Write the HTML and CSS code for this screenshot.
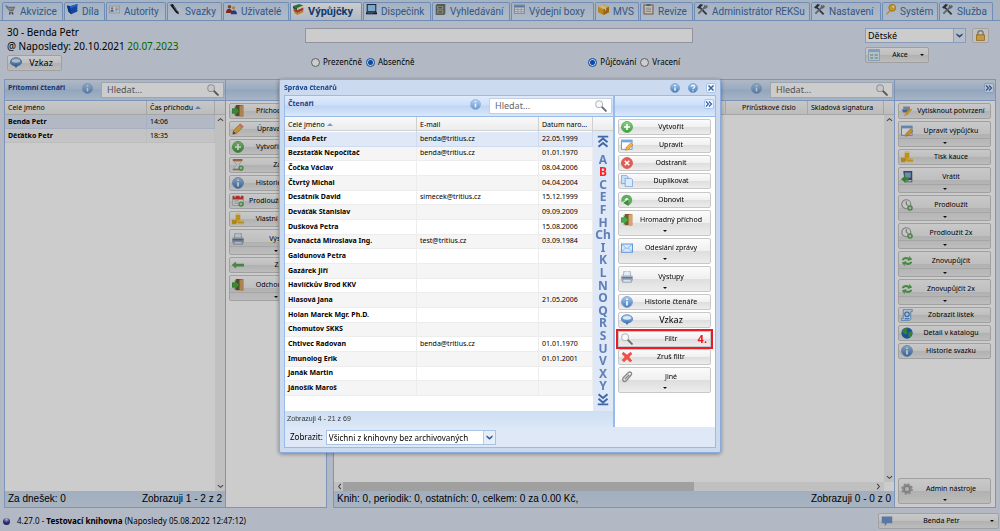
FILE: index.html
```html
<!DOCTYPE html>
<html lang="cs">
<head>
<meta charset="utf-8">
<title>Výpůjčky</title>
<link rel="stylesheet" href="styles.css">
</head>
<body>
<svg class="sprite" aria-hidden="true">
  <defs>
    <linearGradient id="gblue" x1="0" y1="0" x2="0" y2="1"><stop offset="0" stop-color="#a9cdf0"/><stop offset="1" stop-color="#3f78bd"/></linearGradient>
    <linearGradient id="ggreen" x1="0" y1="0" x2="0" y2="1"><stop offset="0" stop-color="#8fd38a"/><stop offset="1" stop-color="#3f9e3c"/></linearGradient>
  </defs>
  <symbol id="cart" viewBox="0 0 16 16"><path d="M0 2h3l1 2h11l-3 6H6z" fill="#7b828a"/><path d="M5 5l2 4M8 5v4M11 5l-1 4M4.500 7h9" stroke="#c9ced4" stroke-width=".8"/><path d="M6 12h6" stroke="#666" stroke-width="1.500"/><circle cx="7" cy="14" r="1.300" fill="#555"/><circle cx="11" cy="14" r="1.300" fill="#555"/></symbol>
  <symbol id="book" viewBox="0 0 16 16"><path d="M0 2l5 1 10-3v11l-9 4-4-4z" fill="#1557c9"/><path d="M0 2l4 2 2 11-4-4z" fill="#0b3f9b"/><path d="M4 4l11-4 1 2-11 4z" fill="#2f80ee"/></symbol>
  <symbol id="card" viewBox="0 0 16 16"><rect x=".5" y="3" width="15" height="10" fill="#e9edf3" stroke="#a9b4c4"/><circle cx="4.500" cy="6.500" r="1.600" fill="#b87745"/><path d="M2 11c0-3 5-3 5 0z" fill="#2f69b5"/><path d="M9 6h5M9 8h5M9 10h3" stroke="#8aa2c4"/></symbol>
  <symbol id="pen" viewBox="0 0 16 16"><path d="M0 1l4-1 8 11 1 4-4-2z" fill="#16191e"/><path d="M5 3l6 8" stroke="#9aa2ac"/><path d="M9 8l6-3v7z" fill="#e8eaed"/></symbol>
  <symbol id="users" viewBox="0 0 16 16"><circle cx="5" cy="4" r="2.600" fill="#9a5a2a"/><path d="M0 13c0-8 9-8 9 0z" fill="#9d2f28"/><circle cx="11" cy="5.500" r="2.400" fill="#d6a05f"/><path d="M7 15c0-8 9-8 9 0z" fill="#2a4f95"/></symbol>
  <symbol id="books" viewBox="0 0 16 16"><path d="M0 3l9-3 6 2-9 4z" fill="#3f8a44"/><path d="M0 3l6 3v3L0 6z" fill="#27632b"/><path d="M6 6l9-4v3L6 9z" fill="#f1f1e6"/><path d="M1 7l5 2 9-4v4l-9 4-5-3z" fill="#cc4631"/><path d="M2 10l4 3 9-4v3l-9 4-4-3z" fill="#e2a531"/></symbol>
  <symbol id="monitor" viewBox="0 0 16 16"><rect x="1" y="0" width="14" height="12" fill="#1b2b52"/><rect x="2.500" y="1.500" width="11" height="9" fill="#9bd2f4"/><path d="M0 12h16v3H0z" fill="#16203c"/><path d="M2 13h9" stroke="#8896b0"/></symbol>
  <symbol id="cabinet" viewBox="0 0 16 16"><path d="M1 2l2-2h12v14l-2 2H1z" fill="#6c7268"/><rect x="3" y="3" width="9" height="5" fill="#a6ab9f"/><rect x="3" y="9" width="9" height="5" fill="#a6ab9f"/><path d="M5 5.500h5M5 11.500h5" stroke="#40453c" stroke-width="1.500"/></symbol>
  <symbol id="grid" viewBox="0 0 16 16"><rect x=".5" y="1.500" width="15" height="12" fill="#f4f6f9" stroke="#8094b1"/><path d="M1 2h14v3H1z" fill="#6d92c5"/><path d="M1 8h14M1 11h14M5.500 5v8M10.500 5v8" stroke="#a5b5cb"/></symbol>
  <symbol id="box" viewBox="0 0 16 16"><path d="M0 4l8-4 8 4v8l-8 4-8-4z" fill="#e6a62e"/><path d="M0 4l8-4 8 4-8 4z" fill="#f9d781"/><path d="M8 8l8-4v8l-8 4z" fill="#c27f18"/><path d="M4 2.500l7 4v3" fill="none" stroke="#fff1cc" stroke-width="1.500"/></symbol>
  <symbol id="clip" viewBox="0 0 16 16"><rect x="1.500" y="1.500" width="13" height="13" fill="#f7f4ee" stroke="#8d6f58" stroke-width="1.500"/><path d="M5 0h6v3H5z" fill="#777"/><path d="M4 6h8M4 8.500h8M4 11h8" stroke="#888"/></symbol>
  <symbol id="tools" viewBox="0 0 16 16"><path d="M4 5L14 15" stroke="#3d444b" stroke-width="2.600"/><path d="M13 3L2 14" stroke="#767d84" stroke-width="2.600"/><path d="M0 5l5-5 4 1-6 6z" fill="#343b42"/><path d="M10 1l3 2 1-2 2 3-3 3-3-1z" fill="#767d84"/></symbol>
  <symbol id="key" viewBox="0 0 16 16"><path d="M8 8L1 15h3v-2h2v-2h2l2-1z" fill="#dfa31c"/><circle cx="10.500" cy="5.500" r="5" fill="#f3bd32" stroke="#b98313"/><circle cx="12" cy="4" r="1.500" fill="#fff"/></symbol>
  <symbol id="bubble" viewBox="0 0 16 16"><ellipse cx="8" cy="6.500" rx="7.500" ry="5.500" fill="url(#gblue)" stroke="#4d79b4"/><ellipse cx="8" cy="5" rx="5.500" ry="2.500" fill="#d9eafa"/><path d="M6 11l2 4 2-4z" fill="#3f6fae"/></symbol>
  <symbol id="flag" viewBox="0 0 16 16"><path d="M1 2h14v9H8l-3 4v-4H1z" fill="#6f96d0"/></symbol>
  <symbol id="info" viewBox="0 0 16 16"><circle cx="8" cy="8" r="7.300" fill="url(#gblue)" stroke="#7698c0"/><path d="M8 7v5.500M8 3.200v2" stroke="#fff" stroke-width="2.200"/></symbol>
  <symbol id="help" viewBox="0 0 16 16"><circle cx="8" cy="8" r="7.300" fill="url(#gblue)" stroke="#6f92bd"/><path d="M5.500 6c0-3 5.500-3 5 0 0 2-2.500 1.500-2.500 4M8 11.500v2" fill="none" stroke="#fff" stroke-width="1.800"/></symbol>
  <symbol id="lens" viewBox="0 0 16 16"><path d="M8.500 8.500l6 6" stroke="#6d6d6d" stroke-width="2.600" stroke-linecap="round"/><circle cx="5.500" cy="5.500" r="4.500" fill="#f7f9fa" stroke="#b3b8bb" stroke-width="1.400"/></symbol>
  <symbol id="lock" viewBox="0 0 16 16"><path d="M4 8V5a4 4 0 0 1 8 0v3" fill="none" stroke="#999" stroke-width="2"/><rect x="2" y="7" width="12" height="8" fill="#f0b43c" stroke="#b57c17"/><path d="M3 10h10M3 13h10" stroke="#ffe09a"/></symbol>
  <symbol id="table" viewBox="0 0 16 16"><rect x=".5" y=".5" width="15" height="15" rx="1" fill="#e2effc" stroke="#8fb2dd"/><path d="M1 1h14v3H1z" fill="#a5c4ea"/><path d="M3 7h4v2H3zM9 7h4v2H9zM3 11h4v2H3zM9 11h4v2H9z" fill="#8dbf9c"/></symbol>
  <symbol id="door" viewBox="0 0 16 16"><path d="M5 0h10v15H5z" fill="#7b5531"/><path d="M10 1l5-1v16l-5-1z" fill="#d9a566"/><path d="M0 5h4V2l6 6-6 6v-3H0z" fill="#4bab46" stroke="#2c7a2b" stroke-width=".7"/></symbol>
  <symbol id="pencil" viewBox="0 0 16 16"><path d="M1 15l1-5L11 1l4 4-9 9z" fill="#f2b544" stroke="#b8792a" stroke-width=".8"/><path d="M11 1l4 4-2 1.500L9.500 3z" fill="#e98f7c"/><path d="M1 15l1-4 3 3z" fill="#5b4a38"/></symbol>
  <symbol id="plus" viewBox="0 0 16 16"><circle cx="8" cy="8" r="7.300" fill="url(#ggreen)" stroke="#4b9a49"/><path d="M8 4v8M4 8h8" stroke="#fff" stroke-width="2.200"/></symbol>
  <symbol id="hourglass" viewBox="0 0 16 16"><path d="M1 0h13v3H1zM1 13h13v2H1z" fill="#c3793f"/><path d="M3 3h9c0 3-3 4-3 5s3 2 3 5H3c0-3 3-4 3-5S3 6 3 3z" fill="#e6edf3" stroke="#9aa7b3" stroke-width=".7"/><circle cx="12" cy="12" r="3.500" fill="#4ca349"/><path d="M12 10v4M10 12h4" stroke="#fff"/></symbol>
  <symbol id="calendar" viewBox="0 0 16 16"><rect x="1" y="2" width="14" height="12" fill="#f3f3f3" stroke="#aaa"/><path d="M1 1h14v5H1z" fill="#d83a3a"/><path d="M4 0v3M11 0v3" stroke="#fff" stroke-width="1.500"/><path d="M3 8h6M3 11h5" stroke="#999"/><circle cx="12" cy="12" r="3.500" fill="#4ca349"/><path d="M12 10v4M10 12h4" stroke="#fff"/></symbol>
  <symbol id="coins" viewBox="0 0 16 16"><path d="M5 1h6v12H5z" fill="#f0bf2d"/><path d="M0 9h6v6H0z" fill="#e3a91e"/><path d="M8 10h8v5H8z" fill="#f6cf4b"/><path d="M5 4h6M5 7h6M0 12h6M8 12.500h8" stroke="#d79b14" stroke-width=".8"/><ellipse cx="8" cy="1.500" rx="3" ry="1.300" fill="#ffe485"/></symbol>
  <symbol id="printer" viewBox="0 0 16 16"><path d="M4 0h8l1 7H3z" fill="#e3eefa" stroke="#8fa1b3"/><path d="M1 6h14l1 2v5H0V8z" fill="#a7b4c2"/><path d="M1 8h14v2H1z" fill="#6b7988"/><path d="M3 11h10l1 4H2z" fill="#d3e3f5" stroke="#6d8199" stroke-width=".8"/></symbol>
  <symbol id="back" viewBox="0 0 16 16"><path d="M0 8l5-4v2.500h11v3H5V12z" fill="#5cab56" stroke="#3c8a3a" stroke-width=".5"/></symbol>
  <symbol id="edit" viewBox="0 0 16 16"><rect x=".7" y="1.700" width="14" height="12" fill="#fff" stroke="#5e92d2" stroke-width="1.200"/><path d="M0 1h15v3.500H0z" fill="#76a7e2"/><path d="M6 15l1-4 6-6 3 3-6 6z" fill="#f2b13d" stroke="#b8742a" stroke-width=".7"/></symbol>
  <symbol id="remove" viewBox="0 0 16 16"><circle cx="8" cy="8" r="7.300" fill="#e55c54" stroke="#ca4b45"/><path d="M5 5l6 6M11 5l-6 6" stroke="#fff" stroke-width="2"/></symbol>
  <symbol id="copy" viewBox="0 0 16 16"><path d="M.5.500h7l2 2v9h-9z" fill="#c9dff9" stroke="#6a9ad6"/><path d="M5.500 4.500h8l2 2v9h-10z" fill="#dcebfd" stroke="#6a9ad6"/></symbol>
  <symbol id="refresh" viewBox="0 0 16 16"><path d="M3 10a5 5 0 1 1 6 3" fill="none" stroke="#5fae5b" stroke-width="4.500"/><path d="M10 7v9L3 12z" fill="#3d8c3b"/></symbol>
  <symbol id="mail" viewBox="0 0 16 16"><rect x=".7" y="2.700" width="14.600" height="11" fill="#d6e8fc" stroke="#5e95d8" stroke-width="1.300"/><path d="M1 3l7 6 7-6M1 13l5-5M15 13l-5-5" fill="none" stroke="#78a7df"/></symbol>
  <symbol id="cross" viewBox="0 0 16 16"><path d="M3 1l5 4 5-4 2 3-4 4 4 5-3 2-4-4-4 4-3-3 4-4-4-4z" fill="#ee5149"/></symbol>
  <symbol id="paperclip" viewBox="0 0 16 16"><path d="M3 9l7-7c2-2 6 1 3 4l-6 7c-3 3-6-1-4-4l6-6M5 11l6-6" fill="none" stroke="#888" stroke-width="1.800"/></symbol>
  <symbol id="printpen" viewBox="0 0 16 16"><path d="M3 2h9v4H3z" fill="#99a1aa"/><path d="M1 6h14L8 10H3z" fill="#4d7fc2"/><path d="M4 15l2-5 6-5 2 2-5 6z" fill="#f0b43c"/></symbol>
  <symbol id="return" viewBox="0 0 16 16"><path d="M3 0h12v15H5z" fill="#3a5c85"/><path d="M5 2h8v7H5z" fill="#8eb0d4"/><path d="M4 12h10v2H4z" fill="#dfe6ee"/><path d="M0 11l6-5v3h4v4H6v3z" fill="#44a03f"/></symbol>
  <symbol id="clock" viewBox="0 0 16 16"><circle cx="7" cy="7" r="6" fill="#f6f7f5" stroke="#a0a29c" stroke-width="1.600"/><path d="M7 3v4l3 2" fill="none" stroke="#555"/><circle cx="12" cy="12" r="3.700" fill="#55a251"/><path d="M12 10v4M10 12h4" stroke="#fff"/></symbol>
  <symbol id="cycle" viewBox="0 0 16 16"><path d="M1 7c1-5 7-5 10-3V1l4 5-6 2V6C6 5 4 6 4 7zM15 9c-1 5-7 5-10 3v3l-4-5 6-2v2c3 1 5 0 5-1z" fill="#5aac55"/></symbol>
  <symbol id="sheet" viewBox="0 0 16 16"><path d="M3 .500h12v3h-2v9c0 2-1 3-3 3H.500v-3H3z" fill="#deecfb" stroke="#5790d2"/><circle cx="8" cy="7" r="3" fill="none" stroke="#397dcb" stroke-width="1.500"/><path d="M5 13h6" stroke="#397dcb" stroke-width="1.500"/></symbol>
  <symbol id="globe" viewBox="0 0 16 16"><circle cx="8" cy="8" r="7.500" fill="#1f66bd"/><path d="M3 3c2-2 5-2 6-1L7 5l2 2-2 3-3-1-3-3zM10 8l4-3 1 5-3 4-2-1z" fill="#45a339"/></symbol>
  <symbol id="gear" viewBox="0 0 16 16"><circle cx="8" cy="8" r="6.300" fill="#aaa" stroke="#aaa" stroke-width="3" stroke-dasharray="2.500 2.450"/><circle cx="8" cy="8" r="3.500" fill="#ddd" stroke="#8b8b8b"/></symbol>
  <symbol id="chev" viewBox="0 0 16 16"><path d="M1 3l7 5 7-5v4l-7 6-7-6z" fill="#345b95"/></symbol>
  <symbol id="dbl" viewBox="0 0 16 16"><path d="M2 3l5 5-5 5M8 3l5 5-5 5" fill="none" stroke="#2d5fae" stroke-width="2.200"/></symbol>
  <symbol id="close" viewBox="0 0 16 16"><path d="M3 3l10 10M13 3L3 13" stroke="#3c64a0" stroke-width="3"/></symbol>
  <symbol id="jump" viewBox="0 0 16 16"><path d="M1 1.500h14M2 9l6-5 6 5M2 15l6-5 6 5" fill="none" stroke="#3f66a6" stroke-width="2.600"/></symbol>
  <symbol id="arrow" viewBox="0 0 16 16"><path d="M2 11l6-5 6 5" fill="none" stroke="#555" stroke-width="2.500"/></symbol>
</svg>

<div class="app">
  <nav class="tabs">
    <button class="tab"><svg><use href="#cart"/></svg>Akvizice</button>
    <button class="tab"><svg><use href="#book"/></svg>Díla</button>
    <button class="tab"><svg><use href="#card"/></svg>Autority</button>
    <button class="tab"><svg><use href="#pen"/></svg>Svazky</button>
    <button class="tab"><svg><use href="#users"/></svg>Uživatelé</button>
    <button class="tab active"><svg><use href="#books"/></svg>Výpůjčky</button>
    <button class="tab"><svg><use href="#monitor"/></svg>Dispečink</button>
    <button class="tab"><svg><use href="#cabinet"/></svg>Vyhledávání</button>
    <button class="tab"><svg><use href="#grid"/></svg>Výdejní boxy</button>
    <button class="tab"><svg><use href="#box"/></svg>MVS</button>
    <button class="tab"><svg><use href="#clip"/></svg>Revize</button>
    <button class="tab"><svg><use href="#tools"/></svg>Administrátor REKSu</button>
    <button class="tab"><svg><use href="#tools"/></svg>Nastavení</button>
    <button class="tab"><svg><use href="#key"/></svg>Systém</button>
    <button class="tab"><svg><use href="#tools"/></svg>Služba</button>
  </nav>

  <header class="desk">
    <div class="reader">
      <div>30 - Benda Petr</div>
      <div>@ Naposledy: 20.10.2021 <span class="valid">20.07.2023</span></div>
      <button class="btn message"><span class="face"><svg><use href="#bubble"/></svg><span class="label big">Vzkaz</span></span></button>
    </div>
    <div class="entry">
      <input class="code" type="text" aria-label="Čárový kód">
      <div class="modes">
        <div class="pair">
          <label><input type="radio" name="place">Prezenčně</label>
          <label><input type="radio" name="place" checked>Absenčně</label>
        </div>
        <div class="pair">
          <label><input type="radio" name="dir" checked>Půjčování</label>
          <label><input type="radio" name="dir">Vracení</label>
        </div>
      </div>
    </div>
    <div class="branch">
      <div class="branch-row">
        <span class="combo"><select aria-label="Oddělení"><option>Dětské</option></select><svg><use href="#chev"/></svg></span>
        <button class="lock" aria-label="Zámek"><svg><use href="#lock"/></svg></button>
      </div>
      <button class="btn actions"><span class="face"><svg><use href="#table"/></svg><span class="label">Akce</span><i class="down"></i></span></button>
    </div>
  </header>

  <main class="work">
    <section class="panel present">
      <div class="list">
        <div class="head"><h2>Přítomní čtenáři</h2><svg class="hint"><use href="#info"/></svg>
          <span class="search"><input type="text" placeholder="Hledat..." aria-label="Hledat přítomné"><svg><use href="#lens"/></svg></span></div>
        <div class="scroller">
          <table class="data">
            <colgroup><col><col class="c-time"></colgroup>
            <thead><tr><th>Celé jméno</th><th>Čas příchodu <i class="up"></i></th></tr></thead>
            <tbody>
              <tr class="sel"><td><b>Benda Petr</b></td><td>14:06</td></tr>
              <tr><td><b>Děťátko Petr</b></td><td>18:35</td></tr>
            </tbody>
          </table>
          <div class="vbar"><svg><use href="#arrow"/></svg><svg class="flip"><use href="#arrow"/></svg></div>
        </div>
        <div class="foot"><span>Za dnešek: 0</span><span>Zobrazuji 1 - 2 z 2</span></div>
      </div>
      <div class="side">
        <div class="head"></div>
        <div class="buttons">
          <button class="btn"><span class="face"><svg><use href="#door"/></svg><span class="label">Příchod čtenáře</span></span></button>
          <button class="btn"><span class="face"><svg><use href="#pencil"/></svg><span class="label">Úprava čtenáře</span></span></button>
          <button class="btn"><span class="face"><svg><use href="#plus"/></svg><span class="label">Vytvořit čtenáře</span></span></button>
          <button class="btn"><span class="face"><svg><use href="#hourglass"/></svg><span class="label">Zápis</span></span></button>
          <button class="btn"><span class="face"><svg><use href="#info"/></svg><span class="label">Historie čtenáře</span></span></button>
          <button class="btn"><span class="face"><svg><use href="#calendar"/></svg><span class="label">Prodloužit registraci</span></span></button>
          <button class="btn"><span class="face"><svg><use href="#coins"/></svg><span class="label">Vlastní poplatek</span></span></button>
          <button class="btn split"><span class="face"><svg><use href="#printer"/></svg><span class="label">Výstupy</span></span><i class="down"></i></button>
          <button class="btn"><span class="face"><svg><use href="#back"/></svg><span class="label">Zpět</span></span></button>
          <button class="btn split"><span class="face"><svg><use href="#door"/></svg><span class="label">Odchod čtenáře</span></span><i class="down"></i></button>
        </div>
      </div>
    </section>

    <section class="panel loans">
      <div class="list">
        <div class="head"><svg class="hint"><use href="#info"/></svg>
          <span class="search"><input type="text" placeholder="Hledat..." aria-label="Hledat výpůjčky"><svg><use href="#lens"/></svg></span></div>
        <div class="scroller">
          <table class="data">
            <colgroup><col><col class="c-inv"><col class="c-sig"></colgroup>
            <thead><tr><th></th><th class="num">Přírůstkové číslo</th><th>Skladová signatura</th></tr></thead>
          </table>
          <div class="vbar"><svg><use href="#arrow"/></svg><svg class="flip"><use href="#arrow"/></svg></div>
        </div>
        <div class="hbar"><svg class="left"><use href="#arrow"/></svg><span class="track"><span class="thumb"></span></span><svg class="right"><use href="#arrow"/></svg></div>
        <div class="foot"><span>Knih: 0, periodik: 0, ostatních: 0, celkem: 0 za 0.00 Kč,</span><span>Zobrazuji 0 - 0 z 0</span></div>
      </div>
      <div class="side">
        <div class="head end"><button class="tool" aria-label="Sbalit"><svg><use href="#dbl"/></svg></button></div>
        <div class="buttons">
          <button class="btn"><span class="face"><svg><use href="#printpen"/></svg><span class="label">Vytisknout potvrzení</span></span></button>
          <button class="btn split"><span class="face"><svg><use href="#edit"/></svg><span class="label">Upravit výpůjčku</span></span><i class="down"></i></button>
          <button class="btn"><span class="face"><svg><use href="#coins"/></svg><span class="label">Tisk kauce</span></span></button>
          <button class="btn split"><span class="face"><svg><use href="#return"/></svg><span class="label">Vrátit</span></span><i class="down"></i></button>
          <button class="btn split"><span class="face"><svg><use href="#clock"/></svg><span class="label">Prodloužit</span></span><i class="down"></i></button>
          <button class="btn split"><span class="face"><svg><use href="#clock"/></svg><span class="label">Prodloužit 2x</span></span><i class="down"></i></button>
          <button class="btn split"><span class="face"><svg><use href="#cycle"/></svg><span class="label">Znovupůjčit</span></span><i class="down"></i></button>
          <button class="btn split"><span class="face"><svg><use href="#cycle"/></svg><span class="label">Znovupůjčit 2x</span></span><i class="down"></i></button>
          <button class="btn"><span class="face"><svg><use href="#sheet"/></svg><span class="label">Zobrazit lístek</span></span></button>
          <button class="btn"><span class="face"><svg><use href="#globe"/></svg><span class="label">Detail v katalogu</span></span></button>
          <button class="btn"><span class="face"><svg><use href="#info"/></svg><span class="label">Historie svazku</span></span></button>
          <button class="btn menu last"><span class="face"><svg><use href="#gear"/></svg><span class="label">Admin nástroje</span></span><i class="down"></i></button>
        </div>
      </div>
    </section>
  </main>

  <footer class="status">
    <i class="orb"></i>
    <span>4.27.0 - <b>Testovací knihovna</b> (Naposledy 05.08.2022 12:47:12)</span>
    <button class="btn account"><span class="face"><svg><use href="#flag"/></svg><span class="label">Benda Petr</span><i class="down"></i></span></button>
  </footer>
</div>

<div class="mask">
  <div class="window" role="dialog" aria-labelledby="win-title">
    <div class="title"><h1 id="win-title">Správa čtenářů</h1>
      <svg><use href="#info"/></svg><svg><use href="#help"/></svg>
      <button class="tool" aria-label="Zavřít"><svg><use href="#close"/></svg></button></div>
    <div class="inner">
      <div class="columns">
        <div class="list">
          <div class="head"><h2>Čtenáři</h2><svg class="hint"><use href="#info"/></svg>
            <span class="search"><input type="text" placeholder="Hledat..." aria-label="Hledat čtenáře"><svg><use href="#lens"/></svg></span></div>
          <div class="scroller">
            <table class="data readers">
              <colgroup><col><col class="c-mail"><col class="c-born"></colgroup>
              <thead><tr><th>Celé jméno <i class="up"></i></th><th>E-mail</th><th>Datum naro...</th></tr></thead>
              <tbody>
                <tr class="sel"><td><b>Benda Petr</b></td><td>benda@tritius.cz</td><td>22.05.1999</td></tr>
                <tr><td><b>Bezstaťák Nepočítač</b></td><td>benda@tritius.cz</td><td>01.01.1970</td></tr>
                <tr><td><b>Čočka Václav</b></td><td></td><td>08.04.2006</td></tr>
                <tr><td><b>Čtvrtý Michal</b></td><td></td><td>04.04.2004</td></tr>
                <tr><td><b>Desátník David</b></td><td>simecek@tritius.cz</td><td>15.12.1999</td></tr>
                <tr><td><b>Deváťák Stanislav</b></td><td></td><td>09.09.2009</td></tr>
                <tr><td><b>Dušková Petra</b></td><td></td><td>15.08.2006</td></tr>
                <tr><td><b>Dvanáctá Miroslava Ing.</b></td><td>test@tritius.cz</td><td>03.09.1984</td></tr>
                <tr><td><b>Galdunová Petra</b></td><td></td><td></td></tr>
                <tr><td><b>Gazárek Jiří</b></td><td></td><td></td></tr>
                <tr><td><b>Havlíčkův Brod KKV</b></td><td></td><td></td></tr>
                <tr><td><b>Hlasová Jana</b></td><td></td><td>21.05.2006</td></tr>
                <tr><td><b>Holan Marek Mgr. Ph.D.</b></td><td></td><td></td></tr>
                <tr><td><b>Chomutov SKKS</b></td><td></td><td></td></tr>
                <tr><td><b>Chtivec Radovan</b></td><td>benda@tritius.cz</td><td>01.01.1970</td></tr>
                <tr><td><b>Imunolog Erik</b></td><td></td><td>01.01.2001</td></tr>
                <tr><td><b>Janák Martin</b></td><td></td><td></td></tr>
                <tr><td><b>Jánošík Maroš</b></td><td></td><td></td></tr>
              </tbody>
            </table>
            <div class="alphabet">
              <svg><use href="#jump"/></svg>
              <a href="#">A</a><a href="#" class="on">B</a><a href="#">C</a><a href="#">E</a><a href="#">F</a><a href="#">H</a><a href="#">Ch</a><a href="#">I</a><a href="#">K</a><a href="#">L</a><a href="#">N</a><a href="#">O</a><a href="#">Q</a><a href="#">R</a><a href="#">S</a><a href="#">U</a><a href="#">V</a><a href="#">X</a><a href="#">Y</a>
              <svg class="flip"><use href="#jump"/></svg>
            </div>
          </div>
          <div class="foot small">Zobrazuji 4 - 21 z 69</div>
        </div>
        <div class="side">
          <div class="head end"><button class="tool" aria-label="Sbalit panel"><svg><use href="#dbl"/></svg></button></div>
          <div class="buttons">
            <button class="btn"><span class="face"><svg><use href="#plus"/></svg><span class="label">Vytvořit</span></span></button>
            <button class="btn"><span class="face"><svg><use href="#edit"/></svg><span class="label">Upravit</span></span></button>
            <button class="btn"><span class="face"><svg><use href="#remove"/></svg><span class="label">Odstranit</span></span></button>
            <button class="btn"><span class="face"><svg><use href="#copy"/></svg><span class="label">Duplikovat</span></span></button>
            <button class="btn"><span class="face"><svg><use href="#refresh"/></svg><span class="label">Obnovit</span></span></button>
            <button class="btn menu"><span class="face"><svg><use href="#door"/></svg><span class="label">Hromadný příchod</span></span><i class="down"></i></button>
            <button class="btn menu"><span class="face"><svg><use href="#mail"/></svg><span class="label">Odeslání zprávy</span></span><i class="down"></i></button>
            <button class="btn menu"><span class="face"><svg><use href="#printer"/></svg><span class="label">Výstupy</span></span><i class="down"></i></button>
            <button class="btn"><span class="face"><svg><use href="#info"/></svg><span class="label">Historie čtenáře</span></span></button>
            <button class="btn"><span class="face"><svg><use href="#bubble"/></svg><span class="label big">Vzkaz</span></span></button>
            <button class="btn marked"><span class="face"><svg><use href="#lens"/></svg><span class="label">Filtr</span></span><span class="step">4.</span></button>
            <button class="btn"><span class="face"><svg><use href="#cross"/></svg><span class="label">Zruš filtr</span></span></button>
            <button class="btn menu"><span class="face"><svg><use href="#paperclip"/></svg><span class="label">Jiné</span></span><i class="down"></i></button>
          </div>
        </div>
      </div>
      <div class="filter">
        <label for="show">Zobrazit:</label>
        <span class="combo"><select id="show"><option>Všichni z knihovny bez archivovaných</option></select><svg><use href="#chev"/></svg></span>
      </div>
    </div>
  </div>
</div>
</body>
</html>
```
FILE: styles.css
```css
* { box-sizing: border-box; }
html, body { height: 100%; }
body {
  margin: 0;
  background: #dfe8f6;
  color: #000;
  font: 7px/12px "Noto Sans", "DejaVu Sans", sans-serif;
}
button, input, select { font: inherit; color: inherit; margin: 0; padding: 0; border: 0; border-radius: 0; }
h1, h2 { margin: 0; font-size: 7px; line-height: 12px; color: #15428b; }
svg { display: block; flex: none; width: 11px; height: 11px; }
.sprite { position: absolute; width: 0; height: 0; }
.flip { transform: scaleY(-1); }
.left { transform: rotate(-90deg); }
.right { transform: rotate(90deg); }

.app { display: flex; flex-direction: column; min-height: 100%; }

/* tab strip */
.tabs {
  display: grid;
  grid-template-columns: 61fr 41fr 60fr 55fr 66fr 72fr 68fr 78fr 83fr 44fr 53fr 116fr 70fr 56fr 54fr;
  column-gap: 1px;
  height: 21px;
  padding: 2px 7px 0 2px;
  border-bottom: 1px solid #8db2e3;
  background: #d2e0f2;
}
.tab {
  display: flex;
  gap: 4px;
  min-width: 0;
  padding: 1px 1px 0 2px;
  border: 1px solid #8db2e3;
  border-bottom: 0;
  border-radius: 2px 2px 0 0;
  background: linear-gradient(#cfdff5, #dce9fb);
  color: #416da3;
  font: 10px/16px Roboto, "Noto Sans", sans-serif;
  white-space: nowrap;
}
.tab.active { background: linear-gradient(#fff, #dfe8f6); color: #15498b; font-size: 11px; font-weight: bold; }

/* desk header */
.desk { display: flex; height: 58px; padding: 4px 4px 0 7px; }
.reader { flex: 298; font-size: 10px; line-height: 14px; }
.valid { color: #008000; }
.entry { flex: 388; padding-top: 3px; }
.code { display: block; width: 100%; height: 15px; border: 1px solid #b5b8c8; background: #fff; }
.modes { display: flex; justify-content: space-between; padding: 13px 13px 0 6px; font-size: 8px; }
.pair { display: flex; gap: 4px; }
.pair label { display: flex; align-items: center; gap: 3px; line-height: 12px; }
.pair input { appearance: none; width: 9px; height: 9px; border: 1px solid #777; border-radius: 50%; background: #fff; }
.pair input:checked { border: 1px solid #0a5fd0; background: radial-gradient(circle, #0a5fd0 0 2px, #fff 3px); }
.branch { flex: 303; display: flex; flex-direction: column; align-items: flex-end; padding-top: 3px; }
.branch-row { display: flex; justify-content: space-between; width: 131px; margin-bottom: 4px; padding-right: 7px; }
.branch .combo { width: 101px; }
.branch .combo select { font-size: 9px; }
.lock { display: grid; place-items: center; width: 17px; height: 15px; border: 1px solid #ccc; border-radius: 2px; background: #f0f0f0; }

.combo { position: relative; display: block; height: 15px; border: 1px solid #a9c3e6; background: #fff; }
.combo select { appearance: none; display: block; width: 100%; height: 13px; padding: 0 14px 0 2px; background: none; font-size: 8px; line-height: 13px; }
.combo svg { position: absolute; top: 0; right: 0; width: 12px; height: 13px; padding: 2px; border-left: 1px solid #b5cbe6; background: #e6eefa; pointer-events: none; }

/* push buttons */
.btn {
  display: block;
  position: relative;
  width: 100%;
  height: 16px;
  border: 1px solid #c8c8c8;
  border-radius: 2px;
  background: linear-gradient(#fbfbfb, #f0f0f0 48%, #dedede 52%, #ececec);
  font-size: 7px;
}
.face { display: flex; align-items: center; height: 14px; padding: 0 1px 0 2px; }
.face svg { width: 12px; height: 12px; }
.label { flex: 1; text-align: center; line-height: 14px; white-space: nowrap; }
.big { font-size: 9px; }
.down { display: block; width: 0; margin: 0 auto; border: 2px solid transparent; border-top-color: #111; border-bottom: 0; }
.split, .menu { height: 26px; }
.split .face { height: 15px; border-bottom: 1px solid #cfcfcf; }
.split > .down, .menu > .down { margin-top: 3px; }
.message { width: 55px; margin-top: 2px; }
.actions { width: 64px; margin-right: 67px; }
.face .down { margin: 0 3px 0 0; }

/* panels */
.work { flex: 1; display: flex; gap: 6px; min-height: 0; padding: 0 4px; }
.panel { display: flex; border: 1px solid #99bbe8; background: #fff; }
.present { width: 323px; }
.loans { flex: 1; }
.list { flex: 1; display: flex; flex-direction: column; min-width: 0; }
.side { display: flex; flex-direction: column; width: 102px; border-left: 2px solid #99bbe8; background: #fff; }
.panel .side { width: 101px; border-left-width: 1px; }
.head {
  display: flex;
  align-items: center;
  height: 21px;
  padding: 0 1px 0 3px;
  border-bottom: 1px solid #99bbe8;
  background: linear-gradient(#dbe7f7, #c2d7f2 45%, #b6cfee 50%, #d3e2f5);
}
.head h2 { padding-bottom: 4px; }
.hint { margin: 0 8px 3px auto; opacity: .7; }
.head.end { justify-content: flex-end; padding-right: 1px; }
.tool { display: grid; place-items: center; width: 10px; height: 10px; border: 1px solid #a9c5ec; border-radius: 2px; background: #eef4fd; }
.tool svg { width: 8px; height: 8px; }
.head .tool { margin-bottom: 5px; }
.search { display: flex; align-items: center; width: 123px; height: 16px; padding: 0 4px 0 5px; border: 1px solid #c5cfdd; background: #fff; }
.search input { flex: 1; min-width: 0; background: none; font-size: 9px; outline: 0; }
.search input::placeholder { color: #666; opacity: 1; }
.search svg { width: 12px; height: 12px; }
.scroller { flex: 1; display: flex; align-items: flex-start; min-height: 0; background: linear-gradient(#f9f9f9, #ececec 13px, #d0d0d0 13px, #d0d0d0 14px, #fff 14px); }
.data { flex: 1; border-collapse: separate; border-spacing: 0; table-layout: fixed; width: 0; }
.data th, .data td { height: 14px; padding: 0 3px; border-right: 1px solid #e2e2e2; text-align: left; font-weight: normal; line-height: 12px; white-space: nowrap; }
.data th { border-right-color: #d0d0d0; }
.data .num { padding-left: 16px; }
.data td { border-right-color: #ededed; border-bottom: 1px solid #ededed; }
.data tr:nth-child(even) td { background: #f5f5f5; }
.data .sel td { background: #dfe8f6; border-color: #cfdcf0; }
.up { display: inline-block; border: 3px solid transparent; border-bottom-color: #6f9fdc; border-top: 0; vertical-align: 1px; }
.c-time { width: 68px; }
.c-inv { width: 82px; }
.c-sig { width: 76px; }
.c-mail { width: 122px; }
.c-born { width: 54px; }
.vbar { align-self: stretch; display: flex; flex-direction: column; justify-content: space-between; align-items: center; width: 10px; margin-top: 14px; padding: 1px 0; background: #f1f1f1; }
.vbar svg, .hbar svg { width: 7px; height: 7px; }
.hbar { display: flex; align-items: center; height: 9px; margin-right: 10px; padding: 0 2px; background: #f1f1f1; }
.track { flex: 1; height: 9px; }
.thumb { display: block; width: 66%; height: 9px; background: #c8c8c8; }
.foot { display: flex; align-items: center; justify-content: space-between; height: 16px; padding: 0 3px; background: linear-gradient(#c9daef, #d3e1f1); font: 10px/16px "Liberation Sans", Arial, sans-serif; }
.foot.small { padding: 0 2px; font-size: 7px; background: linear-gradient(#cddff3, #dae7f6); color: #333; }
.buttons { flex: 1; display: flex; flex-direction: column; gap: 2px; padding: 2px 4px 3px 3px; }
.last { margin-top: auto; }

/* status bar */
.status { display: flex; align-items: center; gap: 7px; height: 23px; padding: 3px 1px 0 3px; font-size: 8px; }
.orb { width: 7px; height: 7px; border-radius: 50%; background: radial-gradient(circle at 50% 20%, #e0e0ff, #3a3a9d 50%, #20205f); }
.account { width: 121px; margin-left: auto; }

/* reader window over a dimmed page */
.mask { position: fixed; inset: 0; display: flex; justify-content: center; align-items: flex-start; padding-top: 79px; background: rgba(0, 0, 0, .2); }
.window { width: 442px; padding: 0 4px 4px; border: 1px solid #8aabdb; border-radius: 2px; background: #cbdaee; box-shadow: 0 1px 4px rgba(0, 0, 0, .4); }
.title { display: flex; align-items: center; gap: 8px; height: 15px; }
.title h1 { flex: 1; }
.title svg { width: 10px; height: 10px; }
.title .tool svg { width: 8px; height: 8px; }
.inner { border: 1px solid #99bbe8; background: #dfe8f6; }
.columns { display: flex; }
.columns .scroller { min-height: 294px; }
.readers { height: 279px; }
.readers th { height: 15px; }
.window .head { background: linear-gradient(#e0ebfb, #cddffa 45%, #bfd5f3 50%, #d9e7fb); }
.alphabet { align-self: stretch; display: flex; flex-direction: column; justify-content: space-between; align-items: center; width: 20px; margin-top: 14px; padding: 4px 0 5px; background: #dfe8f6; }
.alphabet svg { width: 12px; height: 13px; }
.alphabet svg:first-child { margin-bottom: 5px; }
.alphabet a { color: #5f7fb8; font: bold 12px/12px "Noto Sans", sans-serif; text-decoration: none; }
.alphabet .on { color: #f22; }
.columns .buttons { justify-content: space-between; gap: 0; padding: 2px 4px 34px 3px; }
.marked { border-radius: 0; outline: 2px solid #ec1c24; }
.step { position: absolute; top: 0; right: 3px; color: #ec1c24; font: bold 11px/14px "Noto Sans", sans-serif; }
.filter { display: flex; align-items: center; gap: 3px; height: 20px; padding: 0 5px; font-size: 8px; }
.filter .combo { width: 170px; }
```
